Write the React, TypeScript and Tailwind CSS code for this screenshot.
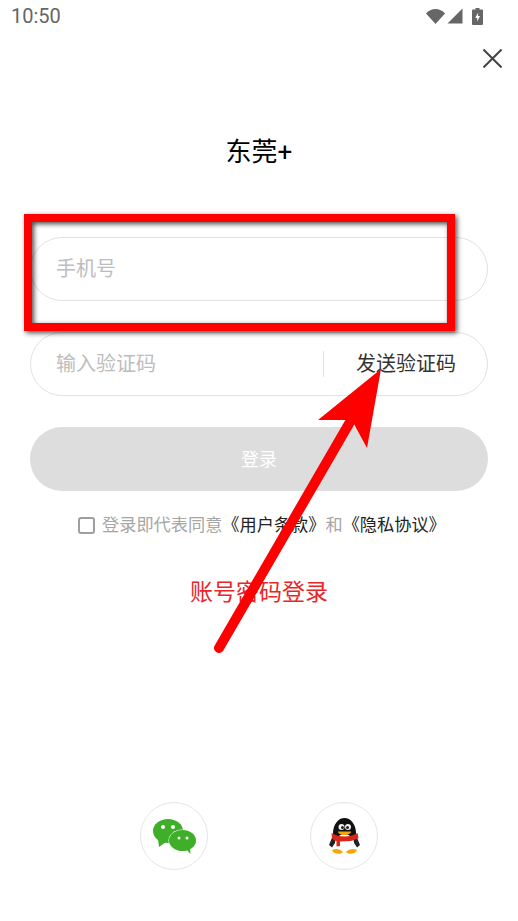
import React from "react";

const cjk = "font-['Roboto','Noto_Sans_CJK_SC',sans-serif]";

function StatusIcons() {
  return (
    <div className="flex items-center">
      <svg width="19" height="15" viewBox="0 0 19 15">
        <path d="M0 4.500C2.500 1.600 5.800 0 9.500 0s7 1.600 9.500 4.500L9.500 15z" fill="#666" />
      </svg>
      <svg width="16" height="16" viewBox="0 0 16 16" className="ml-[2px]">
        <path d="M15.500 0.500V15.500H0.500z" fill="#666" />
      </svg>
      <svg width="11" height="17" viewBox="0 0 11 17" className="ml-[9px]">
        <path d="M3.500 0h4v1.500H10a1 1 0 0 1 1 1V16a1 1 0 0 1-1 1H1a1 1 0 0 1-1-1V2.500a1 1 0 0 1 1-1h2.500z" fill="#666" />
        <path d="M6.200 4.500 3.200 10h2v3.500L8 8H6z" fill="#fff" />
      </svg>
    </div>
  );
}

function WeChatIcon() {
  return (
    <svg width="43" height="35" viewBox="0 0 43 35">
      <ellipse cx="15" cy="12" rx="15" ry="12" fill="#3fae29" />
      <path d="M5 20 6 28 13 23z" fill="#3fae29" />
      <ellipse cx="29.500" cy="21.500" rx="14" ry="11" fill="#fff" />
      <ellipse cx="29.500" cy="21.500" rx="13.500" ry="10.500" fill="#3fae29" />
      <path d="M33 30 37.500 35 37 28z" fill="#3fae29" />
      <circle cx="10" cy="8" r="2" fill="#fff" />
      <circle cx="20" cy="8" r="2" fill="#fff" />
      <circle cx="26" cy="19" r="1.500" fill="#fff" />
      <circle cx="34" cy="19" r="1.500" fill="#fff" />
    </svg>
  );
}

function QQIcon() {
  return (
    <svg width="31" height="37" viewBox="0 0 31 37">
      <ellipse cx="15.500" cy="15" rx="11.500" ry="15" fill="#111" />
      <path d="M4.500 16 0 27l3 2.500 4-6zM26.500 16 31 27l-3 2.500-4-6z" fill="#222" />
      <ellipse cx="15.500" cy="25" rx="9.500" ry="9" fill="#fff" />
      <circle cx="12.500" cy="9" r="3" fill="#f2f2f2" />
      <circle cx="19" cy="9" r="3" fill="#f2f2f2" />
      <circle cx="13.500" cy="9.500" r="1.500" fill="#222" />
      <circle cx="18.500" cy="9.500" r="1.500" fill="#222" />
      <path d="M9 13.500h13c0 1.800-2.800 3.500-6.500 3.500S9 15.300 9 13.500z" fill="#f5a60a" />
      <path d="M2.500 15c4 2.500 8.500 3.500 13 3.500s9-1 13-3.500l1 5c-3.500 2-7 3-10.500 3.200L11 23.500V28l-3.500.500V23c-2-.6-3.500-1.400-4.500-2.500z" fill="#d9261c" />
      <path d="M3 32c3-1.800 8-1.500 11 2-1 2-9 3.500-11-2zM28 32c-3-1.800-8-1.500-11 2 1 2 9 3.500 11-2z" fill="#f5a60a" />
    </svg>
  );
}

export default function App() {
  return (
    <div className={`relative w-[518px] h-[921px] overflow-hidden bg-white ${cjk}`}>
      {/* status bar */}
      <div className="flex items-center justify-between h-[32px] pl-[11px] pr-[35px]">
        <span className="text-[20px] text-[#666] font-['Roboto',sans-serif]">10:50</span>
        <StatusIcons />
      </div>

      {/* close */}
      <div className="flex justify-end pt-[17px] pr-[16px]">
        <svg width="19" height="19" viewBox="0 0 19 19" fill="none" stroke="#444" strokeWidth="2">
          <path d="M0.500 0.500 18.500 18.500M18.500 0.500 0.500 18.500" />
        </svg>
      </div>

      <h1 className="mt-[66px] text-center text-[26px] leading-[36px] font-normal text-black">东莞+</h1>

      <div className="mt-[67px] mx-[30px] flex flex-col gap-[31px]">
        <div className="h-[64px] rounded-full border border-[#e2e2e2] flex items-center pl-[25px] text-[20px] text-[#bdbdbd]">
          手机号
        </div>
        <div className="h-[64px] rounded-full border border-[#e2e2e2] flex items-center pl-[25px] pr-[31px] text-[20px]">
          <span className="text-[#bdbdbd]">输入验证码</span>
          <div className="ml-auto w-px h-[26px] bg-[#e2e2e2]" />
          <span className="ml-[32px] text-[#333]">发送验证码</span>
        </div>
        <div className="h-[64px] rounded-full bg-[#dddddd] flex items-center justify-center text-[18px] text-white">
          登录
        </div>
      </div>

      <div className="mt-[24px] ml-[78px] flex items-center h-[21px]">
        <div className="w-[17px] h-[17px] rounded-[3px] border-2 border-[#9e9e9e]" />
        <p className="ml-[7px] text-[17.2px] text-[#a6a6a6] whitespace-nowrap">
          登录即代表同意<span className="text-[#222]">《用户条款》</span>和<span className="text-[#222]">《隐私协议》</span>
        </p>
      </div>

      <div className="mt-[40px] text-center text-[23px] leading-[34px] text-[#e8262a]">账号密码登录</div>

      <div className="mt-[192px] flex justify-center gap-[102px]">
        <div className="w-[68px] h-[68px] rounded-full border border-[#e6e6e6] flex items-center justify-center">
          <WeChatIcon />
        </div>
        <div className="w-[68px] h-[68px] rounded-full border border-[#e6e6e6] flex items-center justify-center">
          <QQIcon />
        </div>
      </div>

      {/* annotation drawn over the screenshot */}
      <div className="absolute left-[24px] top-[214px] w-[431px] h-[117px] border-[8px] border-[#ff0000] shadow-[2px_2px_5px_rgba(0,0,0,0.7),inset_2px_2px_5px_rgba(0,0,0,0.7)]" />
      <svg className="absolute left-0 top-0" width="518" height="921" viewBox="0 0 518 921">
        <path d="M219 648 L350 422" stroke="#ff0000" strokeWidth="10" strokeLinecap="round" fill="none" />
        <path d="M381 369 L367 448 L354 424 L347 420 L318 420 Z" fill="#ff0000" />
      </svg>
    </div>
  );
}
